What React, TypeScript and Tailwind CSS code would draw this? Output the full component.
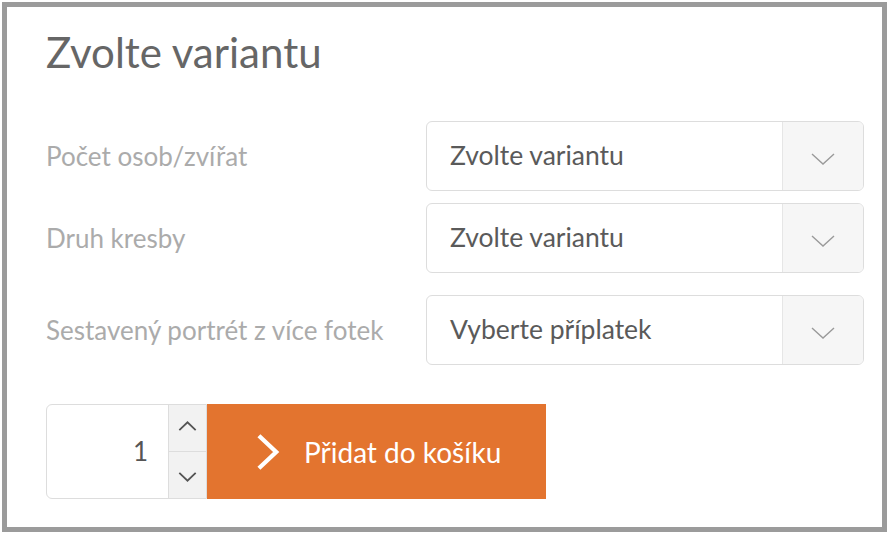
import React from "react";

const font = { fontFamily: "Lato, 'Open Sans', sans-serif" };

function ChevronDown({ className }: { className?: string }) {
  return (
    <svg viewBox="0 0 24 12" className={className} fill="none">
      <path d="M1 1l11 10L23 1" stroke="currentColor" strokeWidth="1.4" />
    </svg>
  );
}

function SelectRow({ label, value, className }: { label: string; value: string; className?: string }) {
  return (
    <div className={`flex items-center ${className ?? ""}`}>
      <div className="w-[380px] text-[26px] text-[#ababab]">{label}</div>
      <div className="flex h-[70px] w-[438px] rounded-[6px] border border-[#dddddd] overflow-hidden">
        <div className="flex-1 flex items-center pl-[23px] text-[26.5px] text-[#5a5a5a]">{value}</div>
        <div className="w-[81px] flex items-center justify-center bg-[#f6f6f6] border-l border-[#e6e6e6]">
          <ChevronDown className="w-[24px] h-[12px] text-[#9a9a9a] mt-[6px]" />
        </div>
      </div>
    </div>
  );
}

export default function App() {
  return (
    <div className="w-[888px] h-[536px] bg-white p-[2px]" style={font}>
      <div className="w-[885px] h-[530px] border-[5px] border-[#9b9b9b] pl-[39px] pt-[20px]">
        <h1 className="text-[42px] leading-[50px] text-[#666666]">Zvolte variantu</h1>

        <SelectRow className="mt-[44px]" label="Počet osob/zvířat" value="Zvolte variantu" />
        <SelectRow className="mt-[12px]" label="Druh kresby" value="Zvolte variantu" />
        <SelectRow className="mt-[22px]" label="Sestavený portrét z více fotek" value="Vyberte příplatek" />

        <div className="flex mt-[39px] h-[95px]">
          <div className="flex w-[161px] rounded-l-[6px] border border-[#dddddd] overflow-hidden">
            <div className="flex-1 flex items-center justify-end pr-[20px] text-[26px] text-[#555555]">1</div>
            <div className="w-[38px] flex flex-col border-l border-[#dddddd] bg-[#f2f2f2]">
              <div className="flex-1 flex items-center justify-center border-b border-[#dddddd]">
                <svg viewBox="0 0 20 11" className="w-[19px] h-[10px] text-[#555555] mt-[-4px]" fill="none">
                  <path d="M1 10l9-8.5 9 8.5" stroke="currentColor" strokeWidth="2" />
                </svg>
              </div>
              <div className="flex-1 flex items-center justify-center">
                <svg viewBox="0 0 20 11" className="w-[19px] h-[10px] text-[#555555] mt-[4px]" fill="none">
                  <path d="M1 1l9 8.5 9-8.5" stroke="currentColor" strokeWidth="2" />
                </svg>
              </div>
            </div>
          </div>
          <button className="w-[339px] bg-[#e3742f] flex items-center pl-[50px] text-white text-[28px]">
            <svg viewBox="0 0 24 38" className="w-[23px] h-[38px] mr-[24px]" fill="none">
              <path d="M2 2l18 17L2 36" stroke="currentColor" strokeWidth="4.5" />
            </svg>
            Přidat do košíku
          </button>
        </div>
      </div>
    </div>
  );
}
